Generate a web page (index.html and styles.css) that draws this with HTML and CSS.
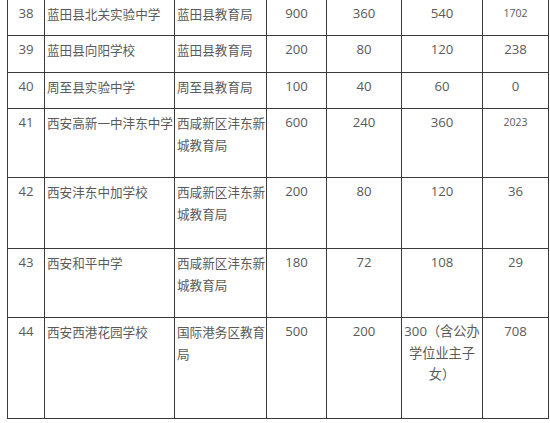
FILE: index.html
```html
<!DOCTYPE html>
<html lang="zh">
<head>
<meta charset="utf-8">
<link rel="stylesheet" href="styles.css">
</head>
<body>
<div class="wrap">
<table class="quota">
  <colgroup>
    <col class="c-no"><col class="c-school"><col class="c-bureau"><col class="c-total"><col class="c-a"><col class="c-b"><col class="c-c">
  </colgroup>
  <tbody>
    <tr class="r-first">
      <td class="num">38</td><td class="txt">蓝田县北关实验中学</td><td class="txt">蓝田县教育局</td><td class="num">900</td><td class="num">360</td><td class="num">540</td><td class="num small">1702</td>
    </tr>
    <tr class="r-one">
      <td class="num">39</td><td class="txt">蓝田县向阳学校</td><td class="txt">蓝田县教育局</td><td class="num">200</td><td class="num">80</td><td class="num">120</td><td class="num">238</td>
    </tr>
    <tr class="r-one2">
      <td class="num">40</td><td class="txt">周至县实验中学</td><td class="txt">周至县教育局</td><td class="num">100</td><td class="num">40</td><td class="num">60</td><td class="num">0</td>
    </tr>
    <tr class="r-two">
      <td class="num">41</td><td class="txt nowrap">西安高新一中沣东中学</td><td class="txt">西咸新区沣东新城教育局</td><td class="num">600</td><td class="num">240</td><td class="num">360</td><td class="num small">2023</td>
    </tr>
    <tr class="r-two2">
      <td class="num">42</td><td class="txt">西安沣东中加学校</td><td class="txt">西咸新区沣东新城教育局</td><td class="num">200</td><td class="num">80</td><td class="num">120</td><td class="num">36</td>
    </tr>
    <tr class="r-two">
      <td class="num">43</td><td class="txt">西安和平中学</td><td class="txt">西咸新区沣东新城教育局</td><td class="num">180</td><td class="num">72</td><td class="num">108</td><td class="num">29</td>
    </tr>
    <tr class="r-three">
      <td class="num">44</td><td class="txt">西安西港花园学校</td><td class="txt">国际港务区教育局</td><td class="num">500</td><td class="num">200</td><td class="num">300（含公办学位业主子女）</td><td class="num">708</td>
    </tr>
  </tbody>
</table>
</div>
</body>
</html>
```

FILE: styles.css
```css
html, body {
  margin: 0;
  padding: 0;
  background: #ffffff;
}

.wrap {
  padding-left: 7px;
  margin-top: -1px;
}

.quota {
  border-collapse: collapse;
  table-layout: fixed;
  width: 541px;
  font-family: "Open Sans", "Noto Sans CJK SC", sans-serif;
  font-size: 12.6px;
  color: #5a5a5a;
}

.c-no { width: 37px; }
.c-school { width: 130px; }
.c-bureau { width: 92px; }
.c-total { width: 60px; }
.c-a { width: 75px; }
.c-b { width: 81px; }
.c-c { width: 66px; }

.quota td {
  border: 1px solid #3a3a3a;
  vertical-align: top;
  padding: 3px 1px 0 1px;
  line-height: 21.5px;
  overflow: hidden;
}

.quota td.txt {
  text-align: left;
  padding-left: 2px;
  padding-right: 0;
  font-family: "Noto Sans CJK SC", sans-serif;
}

.quota td.num {
  text-align: center;
  font-size: 13.2px;
}

.quota td.num.small {
  font-size: 10.5px;
}

.nowrap { white-space: nowrap; }

.r-first td { height: 32px; }
.r-one td { height: 33px; }
.r-one2 td { height: 32px; }
.r-two td { height: 65px; }
.r-two2 td { height: 67px; }
.r-three td { height: 97px; }
```
